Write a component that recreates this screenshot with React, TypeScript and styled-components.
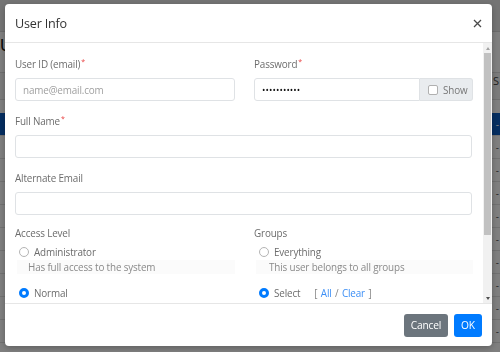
import React, { useState } from "react";
import styled, { createGlobalStyle } from "styled-components";

const GlobalStyle = createGlobalStyle`
  html, body {
    margin: 0;
    padding: 0;
    width: 500px;
    height: 352px;
    overflow: hidden;
    background: #ffffff;
    font-family: "Open Sans", "Noto Sans", sans-serif;
  }
  * { box-sizing: border-box; }
`;

/* ---------- page behind the modal ---------- */

const Page = styled.div`
  width: 500px;
  height: 352px;
  display: flex;
  flex-direction: column;
`;

const Navbar = styled.div`
  height: 32px;
  background: #e9e9e9;
  border-bottom: 1px solid #d6d6d6;
`;

const Main = styled.div`
  flex: 1;
  display: flex;
  flex-direction: column;
  padding-top: 4px;
`;

const Heading = styled.h1`
  margin: 0;
  font-family: "Liberation Sans", sans-serif;
  font-size: 17px;
  font-weight: 400;
  line-height: 20px;
  color: #111;
`;

const TableHead = styled.div`
  margin-top: 16px;
  height: 28px;
  background: #f7f7f7;
  border-top: 1px solid #ddd;
  border-bottom: 1px solid #ddd;
  display: flex;
  justify-content: flex-end;
  padding-right: 1px;
  font-size: 11px;
  color: #444;
`;

const TableRow = styled.div<{ $active?: boolean }>`
  height: 23px;
  display: flex;
  align-items: center;
  justify-content: flex-end;
  padding-right: 1px;
  font-size: 10px;
  color: ${(p) => (p.$active ? "#fff" : "#555")};
  background: ${(p) => (p.$active ? "#0a5cc2" : "#fff")};
  border-bottom: 1px solid #e2e2e2;
`;

const TableGap = styled.div`
  height: 13px;
`;

/* ---------- modal ---------- */

const Backdrop = styled.div`
  position: fixed;
  inset: 0;
  background: rgba(0, 0, 0, 0.5);
  padding: 4px 8px 6px 5px;
`;

const Modal = styled.div`
  width: 487px;
  height: 342px;
  background: #fff;
  border-radius: 4px;
  display: flex;
  flex-direction: column;
  overflow: hidden;
  box-shadow: 0 2px 6px rgba(0, 0, 0, 0.25);
`;

const Header = styled.div`
  height: 39px;
  flex-shrink: 0;
  display: flex;
  align-items: center;
  justify-content: space-between;
  padding: 0 10px 0 10px;
  border-bottom: 1px solid #e6e6e6;
`;

const Title = styled.h5`
  margin: 0;
  font-size: 12.6px;
  font-weight: 400;
  letter-spacing: -0.2px;
  color: #333;
`;

const CloseButton = styled.button`
  border: none;
  background: none;
  padding: 0;
  width: 10px;
  height: 10px;
  display: flex;
  align-items: center;
  justify-content: center;
  cursor: pointer;
`;

const BodyWrap = styled.div`
  flex: 1;
  display: flex;
  overflow: hidden;
`;

const Body = styled.div`
  flex: 1;
  padding: 14px 11px 0 10px;
  overflow: hidden;
`;

const Row = styled.div`
  display: grid;
  grid-template-columns: 220px 219px;
  column-gap: 19px;
`;

const Field = styled.div<{ $gap?: number }>`
  margin-bottom: ${(p) => p.$gap ?? 13}px;
`;

const Label = styled.label<{ $tight?: boolean }>`
  display: block;
  height: 14px;
  line-height: 14px;
  margin-bottom: ${(p) => (p.$tight ? 5 : 7)}px;
  font-size: 9.9px;
  letter-spacing: -0.15px;
  color: #6c6c6c;
`;

const Req = styled.sup`
  color: #e83c3c;
  font-size: 7px;
  margin-left: 1px;
  vertical-align: 4px;
  line-height: 0;
`;

const Input = styled.input`
  display: block;
  width: 100%;
  height: 23px;
  padding: 0 7px;
  font-family: inherit;
  font-size: 9.9px;
  letter-spacing: -0.15px;
  color: #333;
  border: 1px solid #dfe2e5;
  border-radius: 3px;
  outline: none;
  &::placeholder {
    color: #a0a0a0;
  }
`;

const InputGroup = styled.div`
  display: flex;
  height: 23px;
`;

const GroupInput = styled(Input)`
  flex: 1;
  border-radius: 3px 0 0 3px;
  font-size: 9px;
  letter-spacing: 0.1px;
  color: #111;
`;

const Append = styled.label`
  width: 53px;
  display: flex;
  align-items: center;
  gap: 5px;
  padding-left: 8px;
  background: #e9ecef;
  border: 1px solid #dfe2e5;
  border-left: none;
  border-radius: 0 3px 3px 0;
  font-size: 9.9px;
  letter-spacing: -0.15px;
  color: #777;
`;

const Box = styled.span`
  width: 10px;
  height: 10px;
  flex-shrink: 0;
  border: 1px solid #b0b0b0;
  border-radius: 2px;
  background: #fff;
`;

const OptionLine = styled.label<{ $indent: number }>`
  display: flex;
  align-items: center;
  height: 14px;
  padding-left: ${(p) => p.$indent}px;
  font-size: 9.9px;
  letter-spacing: -0.15px;
  color: #6c6c6c;
  cursor: pointer;
`;

const Radio = styled.span<{ $on?: boolean }>`
  width: 10px;
  height: 10px;
  border-radius: 50%;
  margin-right: 5px;
  flex-shrink: 0;
  background: #fff;
  border: ${(p) => (p.$on ? "3px solid #007bff" : "1px solid #b4b4b4")};
`;

const OptionDesc = styled.div<{ $left: number }>`
  margin: 1px 0 12px 2px;
  height: 14px;
  line-height: 14px;
  padding-left: ${(p) => p.$left}px;
  background: #fbfbfb;
  font-size: 9.9px;
  letter-spacing: -0.15px;
  color: #8a8a8a;
`;

const Links = styled.span`
  margin-left: 14px;
  color: #888;
  word-spacing: 1px;
`;

const LinkText = styled.a`
  color: #3d8ff5;
  text-decoration: none;
`;

const Scrollbar = styled.div`
  width: 9px;
  flex-shrink: 0;
  background: #f1f1f1;
  display: flex;
  flex-direction: column;
  align-items: center;
`;

const Arrow = styled.div<{ $down?: boolean }>`
  height: 10px;
  width: 9px;
  display: flex;
  align-items: center;
  justify-content: center;
  &::after {
    content: "";
    border-left: 2.5px solid transparent;
    border-right: 2.5px solid transparent;
    ${(p) =>
      p.$down ? "border-top: 3px solid #505050;" : "border-bottom: 3px solid #a3a3a3;"}
  }
`;

const Thumb = styled.div`
  width: 7px;
  height: 182px;
  background: #c1c1c1;
`;

const Track = styled.div`
  flex: 1;
`;

const Footer = styled.div`
  height: 43px;
  flex-shrink: 0;
  border-top: 1px solid #e6e6e6;
  display: flex;
  align-items: center;
  justify-content: flex-end;
  gap: 6px;
  padding-right: 10px;
`;

const Button = styled.button<{ $primary?: boolean }>`
  height: 23px;
  padding: 0 ${(p) => (p.$primary ? 7 : 5)}px;
  min-width: ${(p) => (p.$primary ? 28 : 44)}px;
  border: none;
  border-radius: 3px;
  font-family: inherit;
  font-size: 10.2px;
  letter-spacing: -0.15px;
  color: #fff;
  background: ${(p) => (p.$primary ? "#007bff" : "#6c757d")};
  cursor: pointer;
`;

const CloseIcon = () => (
  <svg width="9" height="9" viewBox="0 0 9 9">
    <path d="M1 1 L8 8 M8 1 L1 8" stroke="#4a4a4a" strokeWidth="1.3" />
  </svg>
);

export default function App() {
  const [access, setAccess] = useState("normal");
  const [groups, setGroups] = useState("select");

  return (
    <>
      <GlobalStyle />
      <Page>
        <Navbar />
        <Main>
          <Heading>Users</Heading>
          <TableHead>S</TableHead>
          <TableGap />
          {[true, false, false, false, false, false, false, false, false, false].map((a, i) => (
            <TableRow key={i} $active={a}>
              -
            </TableRow>
          ))}
        </Main>
      </Page>

      <Backdrop>
        <Modal>
          <Header>
            <Title>User Info</Title>
            <CloseButton aria-label="Close">
              <CloseIcon />
            </CloseButton>
          </Header>

          <BodyWrap>
            <Body>
              <Row>
                <Field>
                  <Label>
                    User ID (email)<Req>*</Req>
                  </Label>
                  <Input placeholder="name@email.com" />
                </Field>
                <Field>
                  <Label>
                    Password<Req>*</Req>
                  </Label>
                  <InputGroup>
                    <GroupInput type="password" defaultValue="secretpass1" />
                    <Append>
                      <Box />
                      Show
                    </Append>
                  </InputGroup>
                </Field>
              </Row>

              <Field>
                <Label>
                  Full Name<Req>*</Req>
                </Label>
                <Input />
              </Field>

              <Field $gap={11}>
                <Label>Alternate Email</Label>
                <Input />
              </Field>

              <Row>
                <div>
                  <Label $tight>Access Level</Label>
                  <OptionLine $indent={4} onClick={() => setAccess("admin")}>
                    <Radio $on={access === "admin"} />
                    Administrator
                  </OptionLine>
                  <OptionDesc $left={11}>Has full access to the system</OptionDesc>
                  <OptionLine $indent={4} onClick={() => setAccess("normal")}>
                    <Radio $on={access === "normal"} />
                    Normal
                  </OptionLine>
                </div>
                <div>
                  <Label $tight>Groups</Label>
                  <OptionLine $indent={5} onClick={() => setGroups("all")}>
                    <Radio $on={groups === "all"} />
                    Everything
                  </OptionLine>
                  <OptionDesc $left={13}>This user belongs to all groups</OptionDesc>
                  <OptionLine $indent={5} onClick={() => setGroups("select")}>
                    <Radio $on={groups === "select"} />
                    Select
                    <Links>
                      [ <LinkText href="#">All</LinkText> / <LinkText href="#">Clear</LinkText> ]
                    </Links>
                  </OptionLine>
                </div>
              </Row>
            </Body>
            <Scrollbar>
              <Arrow />
              <Thumb />
              <Track />
              <Arrow $down />
            </Scrollbar>
          </BodyWrap>

          <Footer>
            <Button>Cancel</Button>
            <Button $primary>OK</Button>
          </Footer>
        </Modal>
      </Backdrop>
    </>
  );
}
